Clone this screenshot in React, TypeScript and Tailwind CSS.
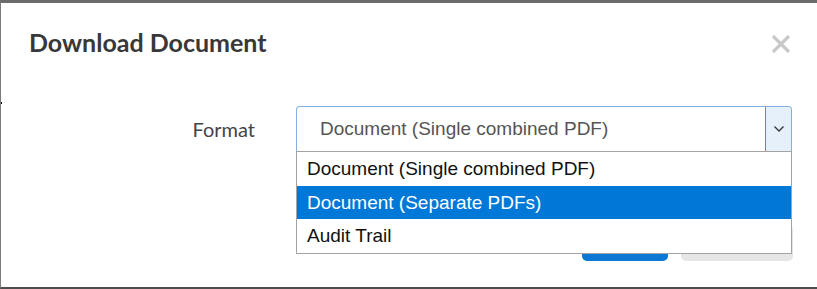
import React from 'react'

const options = [
  'Document (Single combined PDF)',
  'Document (Separate PDFs)',
  'Audit Trail',
]

function CloseIcon() {
  return (
    <svg width="20" height="18" viewBox="0 0 20 18" fill="none">
      <path d="M2 1 L18 17 M18 1 L2 17" stroke="#c8c8c8" strokeWidth="3.2" />
    </svg>
  )
}

function Chevron() {
  return (
    <svg width="12" height="8" viewBox="0 0 12 8" fill="none">
      <path d="M1.5 1.5 L6 6 L10.5 1.5" stroke="#333" strokeWidth="1.3" />
    </svg>
  )
}

export default function App() {
  return (
    <div className="relative w-[817px] h-[289px] overflow-hidden bg-white border-t-[3px] border-t-[#6b6b6b] border-l border-l-[#7b7b7b] border-b-2 border-b-[#4d4d4d] font-['Lato',sans-serif]">
      {/* stray mark on the left edge */}
      <span className="absolute left-[-1px] top-[99px] w-[2px] h-[2px] bg-black" />

      {/* Header */}
      <div className="flex items-start justify-between pl-[28px] pr-[26px] pt-[24px]">
        <h2 className="text-[25px] leading-[30px] font-bold text-[#383838]">Download Document</h2>
        <button className="mt-[8px]">
          <CloseIcon />
        </button>
      </div>

      {/* Body */}
      <div className="flex items-start mt-[49px]">
        <label className="w-[254px] pt-[11px] text-right text-[20px] leading-[24px] text-[#444]">Format</label>
        <div className="relative ml-[41px] w-[496px]">
          <div className="flex h-[45px] items-stretch rounded-t-[4px] border border-[#7fb0df] border-b-0 bg-white font-['Liberation_Sans',Arial,sans-serif]">
            <span className="flex-1 pl-[23px] pt-[11px] text-[19px] leading-[22px] text-[#555]">{options[0]}</span>
            <span className="flex w-[26px] items-center justify-center rounded-tr-[4px] border-l border-[#4a90d9] bg-[#e5f0fb]">
              <Chevron />
            </span>
          </div>

          {/* Open list */}
          <ul className="absolute left-0 top-[45px] z-10 w-[496px] border border-[#a3a3a3] bg-white font-['Liberation_Sans',Arial,sans-serif] text-[19px] leading-[22px]">
            {options.map((o, i) => (
              <li
                key={o}
                className={
                  i === 1
                    ? 'flex h-[33px] items-center pl-[10px] bg-[#0078d7] text-white'
                    : 'flex h-[34px] items-center pl-[10px] text-[#111]'
                }
              >
                {o}
              </li>
            ))}
          </ul>
        </div>
      </div>

      {/* Footer buttons, mostly hidden under the list */}
      <div className="flex justify-end gap-[13px] pr-[24px] mt-[74px]">
        <button className="w-[86px] h-[36px] rounded-[5px] bg-[#0a78d4]" />
        <button className="w-[112px] h-[36px] rounded-[5px] bg-[#e6e6e6]" />
      </div>
    </div>
  )
}
